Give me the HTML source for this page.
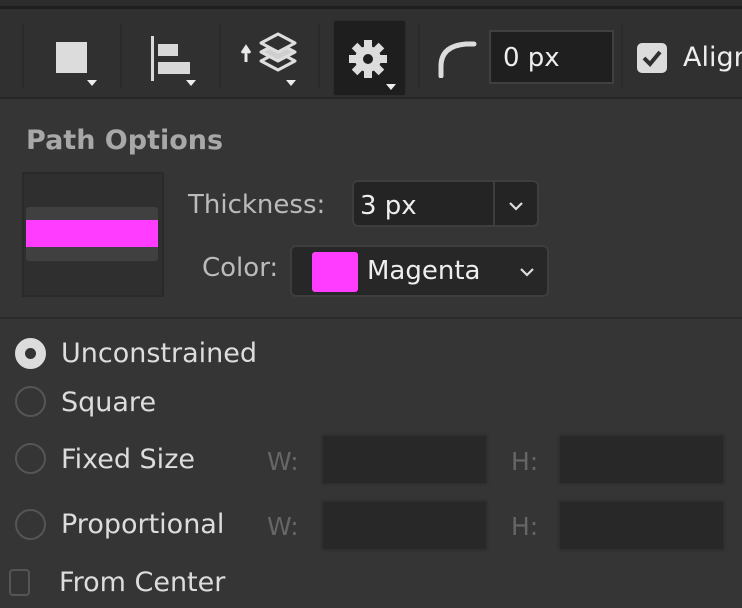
<!DOCTYPE html>
<html><head><meta charset="utf-8"><style>
*{margin:0;padding:0;box-sizing:border-box}
body{width:742px;height:608px;background:#353535;font-family:"DejaVu Sans","Liberation Sans",sans-serif;position:relative;overflow:hidden;color:#ddd}
.a{position:absolute}
.t{position:absolute;white-space:nowrap;line-height:1}
.sep{position:absolute;top:25px;width:2px;height:62px;background:#2a2a2a}
.tri{position:absolute;width:0;height:0;border-left:5px solid transparent;border-right:5px solid transparent;border-top:6px solid #eee}
.radio{position:absolute;left:15px;width:31px;height:31px;border-radius:50%;border:2px solid #555}
.inp{position:absolute;background:#282828;border:1px solid #2e2e2e;box-shadow:0 0 2px #2a2a2a}
</style></head><body>
<div class="a" style="left:0;top:0;width:742px;height:7px;background:#2c2c2c"></div>
<div class="a" style="left:0;top:6px;width:742px;height:3px;background:#1e1e1e"></div>
<div class="a" style="left:0;top:9px;width:742px;height:88px;background:#303030"></div>
<div class="a" style="left:0;top:97px;width:742px;height:2px;background:#262626"></div>

<div class="sep" style="left:22px"></div>
<div class="sep" style="left:120px"></div>
<div class="sep" style="left:219px"></div>
<div class="sep" style="left:318px"></div>
<div class="sep" style="left:418px"></div>
<div class="sep" style="left:621px"></div>

<div class="a" style="left:56px;top:42px;width:31px;height:31px;background:#dcdcdc"></div>
<div class="tri" style="left:87px;top:80px"></div>

<div class="a" style="left:151px;top:36px;width:3px;height:45px;background:#d8d8d8"></div>
<div class="a" style="left:158px;top:44px;width:20px;height:12px;background:#d8d8d8"></div>
<div class="a" style="left:158px;top:62px;width:32px;height:12px;background:#d8d8d8"></div>
<div class="tri" style="left:186px;top:80px"></div>

<svg class="a" style="left:240px;top:32px" width="60" height="55" viewBox="0 0 60 55">
<path d="M6 30 V18 M2 21 L6 15 L10 21" stroke="#e8e8e8" stroke-width="3" fill="#e8e8e8"/>
<g fill="none" stroke="#dedede" stroke-width="3" stroke-linejoin="round">
<path d="M21 29 L38 20 L55 29 L38 38 Z"/>
<path d="M21 20 L38 11 L55 20 L38 29 Z" fill="#cfcfcf"/>
<path d="M21 11 L38 2 L55 11 L38 20 Z" fill="#303030"/>
</g>
</svg>
<div class="tri" style="left:286px;top:80px"></div>

<div class="a" style="left:333px;top:20px;width:73px;height:76px;background:#1e1e1e;border:1px solid #2c2c2c;border-radius:3px"></div>
<svg class="a" style="left:347px;top:38px" width="42" height="42" viewBox="0 0 42 42">
<g fill="#dcdcdc"><circle cx="21" cy="21" r="13"/>
<rect x="17" y="2" width="8" height="38"/><rect x="2" y="17" width="38" height="8"/>
<rect x="17" y="2" width="8" height="38" transform="rotate(45 21 21)"/><rect x="17" y="2" width="8" height="38" transform="rotate(-45 21 21)"/></g>
<circle cx="21" cy="21" r="5" fill="#1e1e1e"/></svg>
<div class="tri" style="left:386px;top:84px"></div>

<svg class="a" style="left:436px;top:38px" width="42" height="40"><path d="M5 38 V28 Q5 8 30 6 H38" fill="none" stroke="#dcdcdc" stroke-width="5" stroke-linecap="round"/></svg>
<div class="a" style="left:489px;top:30px;width:125px;height:54px;background:#1f1f1f;border:2px solid #404040"></div>
<div class="t" style="left:503px;top:45px;font-size:26px;color:#eee">0 px</div>
<div class="a" style="left:637px;top:43px;width:30px;height:30px;background:#dcdcdc;border-radius:5px"></div>
<svg class="a" style="left:637px;top:43px" width="30" height="30"><path d="M7 15 L13 21 L23 9" fill="none" stroke="#303030" stroke-width="4"/></svg>
<div class="t" style="left:683px;top:44px;font-size:27px;color:#eee">Align</div>

<div class="t" style="left:26px;top:127px;font-size:27px;font-weight:bold;color:#a8a8a8">Path Options</div>
<div class="a" style="left:22px;top:172px;width:142px;height:125px;background:#2f2f2f;border:2px solid #2a2a2a"></div>
<div class="a" style="left:26px;top:207px;width:132px;height:54px;background:#404040;border-radius:3px"></div>
<div class="a" style="left:26px;top:220px;width:132px;height:27px;background:#ff3cff"></div>

<div class="t" style="left:188px;top:192px;font-size:26px;color:#bbb">Thickness:</div>
<div class="a" style="left:352px;top:180px;width:187px;height:47px;background:#242424;border:2px solid #3e3e3e;border-radius:6px"></div>
<div class="a" style="left:493px;top:182px;width:2px;height:43px;background:#3e3e3e"></div>
<div class="t" style="left:360px;top:193px;font-size:26px;color:#eee">3 px</div>
<svg class="a" style="left:508px;top:201px" width="16" height="10"><path d="M2 2 L8 8 L14 2" fill="none" stroke="#ddd" stroke-width="2.2"/></svg>

<div class="t" style="left:202px;top:255px;font-size:26px;color:#bbb">Color:</div>
<div class="a" style="left:290px;top:245px;width:259px;height:52px;background:#272727;border:2px solid #3e3e3e;border-radius:6px"></div>
<div class="a" style="left:312px;top:252px;width:46px;height:40px;background:#ff3cff;border-radius:3px"></div>
<div class="t" style="left:367px;top:258px;font-size:26px;color:#eee">Magenta</div>
<svg class="a" style="left:519px;top:267px" width="16" height="10"><path d="M2 2 L8 8 L14 2" fill="none" stroke="#ddd" stroke-width="2.2"/></svg>

<div class="a" style="left:0;top:317px;width:742px;height:2px;background:#2b2b2b"></div>

<div class="radio" style="top:338px;background:#dcdcdc;border-color:#dcdcdc"></div>
<div class="a" style="left:25px;top:348px;width:11px;height:11px;border-radius:50%;background:#333"></div>
<div class="t" style="left:61px;top:340px;font-size:27px;color:#ddd">Unconstrained</div>
<div class="radio" style="top:386px"></div>
<div class="t" style="left:61px;top:389px;font-size:27px;color:#ddd">Square</div>
<div class="radio" style="top:443px"></div>
<div class="t" style="left:61px;top:446px;font-size:27px;color:#ddd">Fixed Size</div>
<div class="radio" style="top:509px"></div>
<div class="t" style="left:61px;top:511px;font-size:27px;color:#ddd">Proportional</div>

<div class="t" style="left:267px;top:449px;font-size:25px;color:#666">W:</div>
<div class="inp" style="left:322px;top:435px;width:165px;height:49px"></div>
<div class="t" style="left:511px;top:449px;font-size:25px;color:#666">H:</div>
<div class="inp" style="left:559px;top:435px;width:165px;height:49px"></div>
<div class="t" style="left:267px;top:514px;font-size:25px;color:#666">W:</div>
<div class="inp" style="left:322px;top:501px;width:165px;height:49px"></div>
<div class="t" style="left:511px;top:514px;font-size:25px;color:#666">H:</div>
<div class="inp" style="left:559px;top:501px;width:165px;height:49px"></div>

<div class="a" style="left:9px;top:569px;width:21px;height:27px;border:2px solid #555;border-radius:4px"></div>
<div class="t" style="left:59px;top:569px;font-size:27px;color:#ddd">From Center</div>
</body></html>
